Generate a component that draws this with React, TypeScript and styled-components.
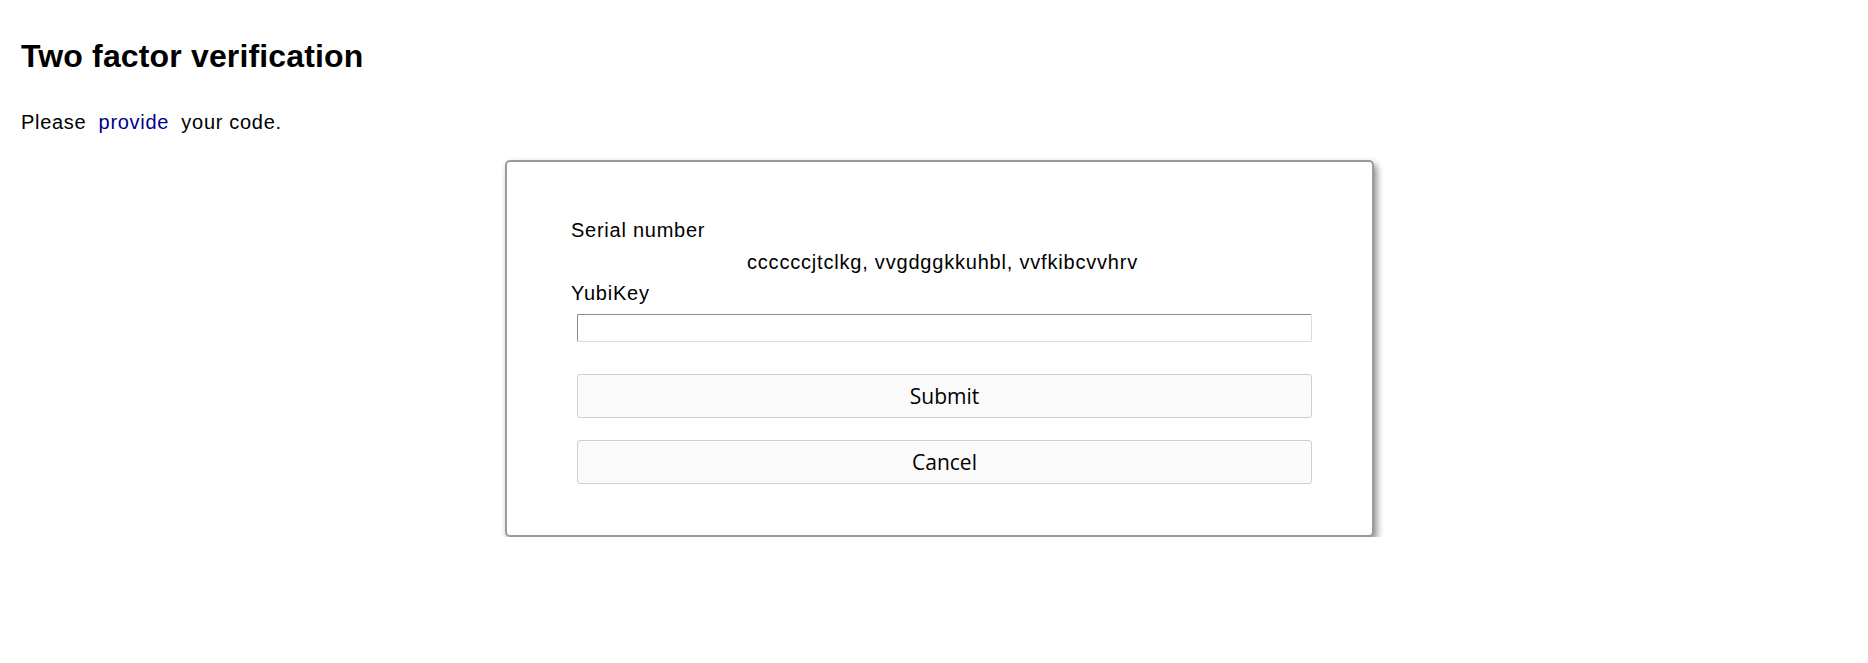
import React from 'react'
import styled, { createGlobalStyle } from 'styled-components'

const GlobalStyle = createGlobalStyle`
  html, body {
    margin: 0;
    padding: 0;
    background: #ffffff;
  }

  body {
    font-family: 'Liberation Sans', Arial, sans-serif;
    color: #000000;
  }
`

const Page = styled.div`
  padding: 38px 21px 0;
`

const Title = styled.h1`
  margin: 0;
  font-size: 32px;
  line-height: 37px;
  font-weight: bold;
  letter-spacing: 0.15px;
`

const Intro = styled.p`
  margin: 35px 0 0;
  font-size: 20px;
  line-height: 24px;
  letter-spacing: 0.7px;
`

const InlineLink = styled.a`
  color: #00008b;
  text-decoration: none;
  padding: 0 6px;
  cursor: pointer;
`

const Dialog = styled.div`
  box-sizing: border-box;
  width: 869px;
  margin: 26px 0 0 484px;
  padding: 56px 54px 51px 64px;
  border: 2px solid #9a9a9a;
  border-radius: 5px;
  background: #ffffff;
  box-shadow: 3px 4px 7px rgba(0, 0, 0, 0.45);
`

const Form = styled.form`
  display: flex;
  flex-direction: column;
`

const FieldLabel = styled.label<{ $gap?: number }>`
  margin-top: ${(p) => p.$gap ?? 0}px;
  font-size: 20px;
  line-height: 24px;
  letter-spacing: 0.75px;
`

const SerialList = styled.div`
  margin-top: 8px;
  margin-right: 4px;
  font-size: 20px;
  line-height: 24px;
  letter-spacing: 0.8px;
  text-align: center;
`

const CodeInput = styled.input`
  box-sizing: border-box;
  height: 28px;
  margin: 9px 6px 0;
  padding: 2px 6px;
  border: 1px solid #dcdcdc;
  border-top-color: #8a8a8a;
  border-left-color: #8a8a8a;
  border-radius: 2px;
  font-family: 'Liberation Sans', Arial, sans-serif;
  font-size: 18px;
  outline: none;
`

const ActionButton = styled.button<{ $gap: number }>`
  box-sizing: border-box;
  height: 44px;
  margin: ${(p) => p.$gap}px 6px 0;
  border: 1px solid #cfcfcf;
  border-radius: 3px;
  background: #fafafa;
  color: #000000;
  font-family: 'Open Sans', 'Noto Sans', sans-serif;
  font-size: 21px;
  cursor: pointer;
`

const serials = ['ccccccjtclkg', 'vvgdggkkuhbl', 'vvfkibcvvhrv']

export default function App() {
  return (
    <>
      <GlobalStyle />
      <Page>
        <Title>Two factor verification</Title>
        <Intro>
          Please <InlineLink>provide</InlineLink> your code.
        </Intro>
        <Dialog>
          <Form onSubmit={(e) => e.preventDefault()}>
            <FieldLabel>Serial number</FieldLabel>
            <SerialList>{serials.join(', ')}</SerialList>
            <FieldLabel $gap={7} htmlFor="yubikey">
              YubiKey
            </FieldLabel>
            <CodeInput id="yubikey" type="text" />
            <ActionButton $gap={32} type="submit">
              Submit
            </ActionButton>
            <ActionButton $gap={22} type="button">
              Cancel
            </ActionButton>
          </Form>
        </Dialog>
      </Page>
    </>
  )
}
